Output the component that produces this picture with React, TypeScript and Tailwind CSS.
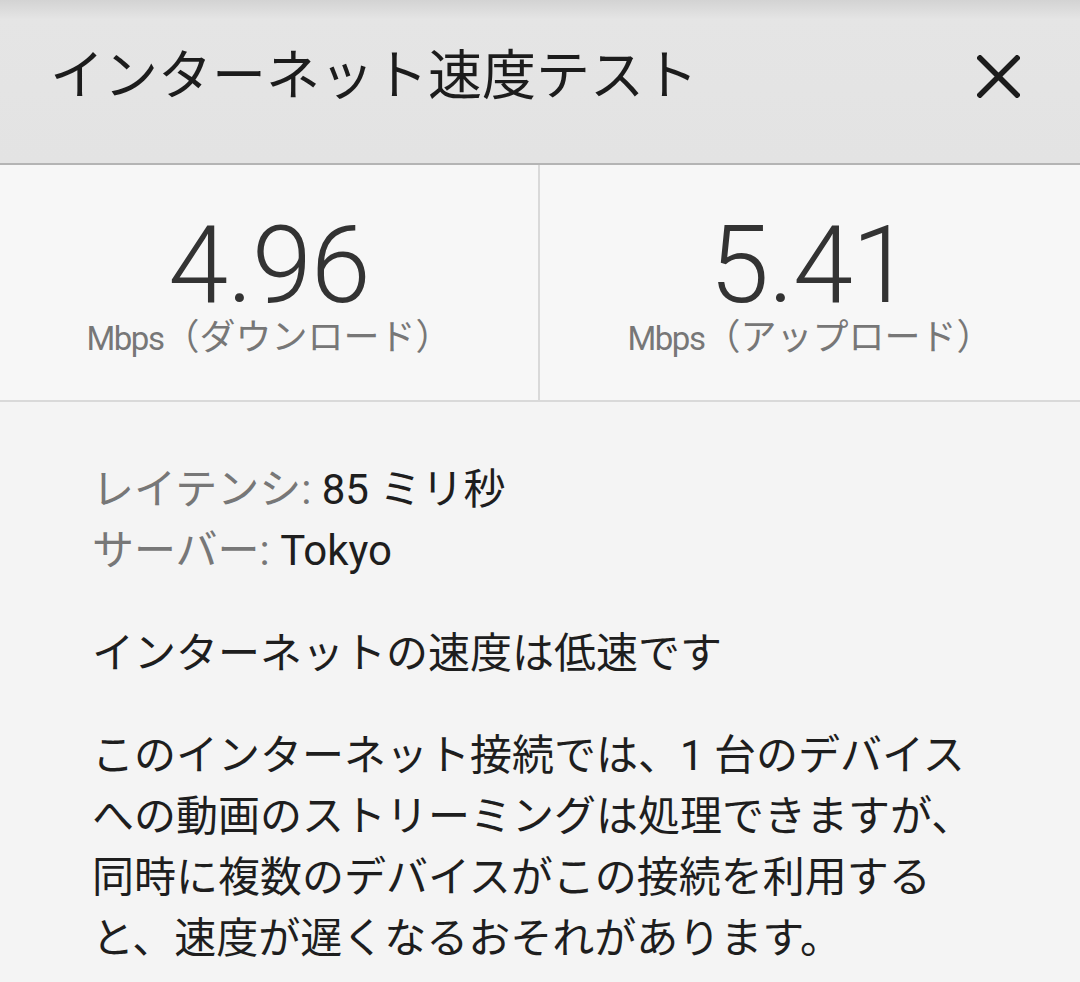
const font = { fontFamily: 'Roboto, "Noto Sans CJK JP", sans-serif' };

function Stat({ value, unit, label, divider }: { value: string; unit: string; label: string; divider?: boolean }) {
  return (
    <div className={`flex flex-col items-center pt-[52px] ${divider ? 'border-r-2 border-[#d9d9d9]' : ''}`}>
      <div className="text-[108px] leading-[96px] font-light text-[#333333] tracking-[-1px]">{value}</div>
      <div className="mt-[5px] text-[36px] leading-[40px] text-[#777777]">
        <span className="text-[33px] tracking-[-1.5px]">{unit}</span>
        {label}
      </div>
    </div>
  );
}

export default function App() {
  return (
    <div className="w-[1080px] h-[982px] overflow-hidden bg-[#f4f4f4]" style={font}>
      {/* header */}
      <header className="h-[165px] flex items-center justify-between pl-[50px] pr-[60px] pb-[10px] border-b-2 border-[#b4b4b4] bg-gradient-to-b from-[#d3d3d3] via-[#e5e5e5] via-[12%] to-[#e3e3e3]">
        <h1 className="text-[54px] leading-none text-[#1c1c1c] font-normal">インターネット速度テスト</h1>
        <svg width="43" height="43" viewBox="0 0 43 43" className="text-[#1c1c1c]">
          <path d="M3 3L40 40M40 3L3 40" stroke="currentColor" strokeWidth="5.5" strokeLinecap="square" />
        </svg>
      </header>

      {/* speeds */}
      <div className="grid grid-cols-2 h-[237px] border-b-2 border-[#d9d9d9] bg-[#f7f7f7]">
        <Stat value="4.96" unit="Mbps" label="（ダウンロード）" divider />
        <Stat value="5.41" unit="Mbps" label="（アップロード）" />
      </div>

      {/* details */}
      <div className="pl-[92px] pt-[57px] text-[42px] leading-[61px] text-[#1e1e1e]">
        <div>
          <span className="text-[#777777]">レイテンシ:</span> 85 ミリ秒
        </div>
        <div>
          <span className="text-[#777777]">サーバー:</span> Tokyo
        </div>
        <p className="mt-[42px]">インターネットの速度は低速です</p>
        <p className="mt-[41px]">
          このインターネット接続では、1 台のデバイス
          <br />
          への動画のストリーミングは処理できますが、
          <br />
          同時に複数のデバイスがこの接続を利用する
          <br />
          と、速度が遅くなるおそれがあります。
        </p>
      </div>
    </div>
  );
}
